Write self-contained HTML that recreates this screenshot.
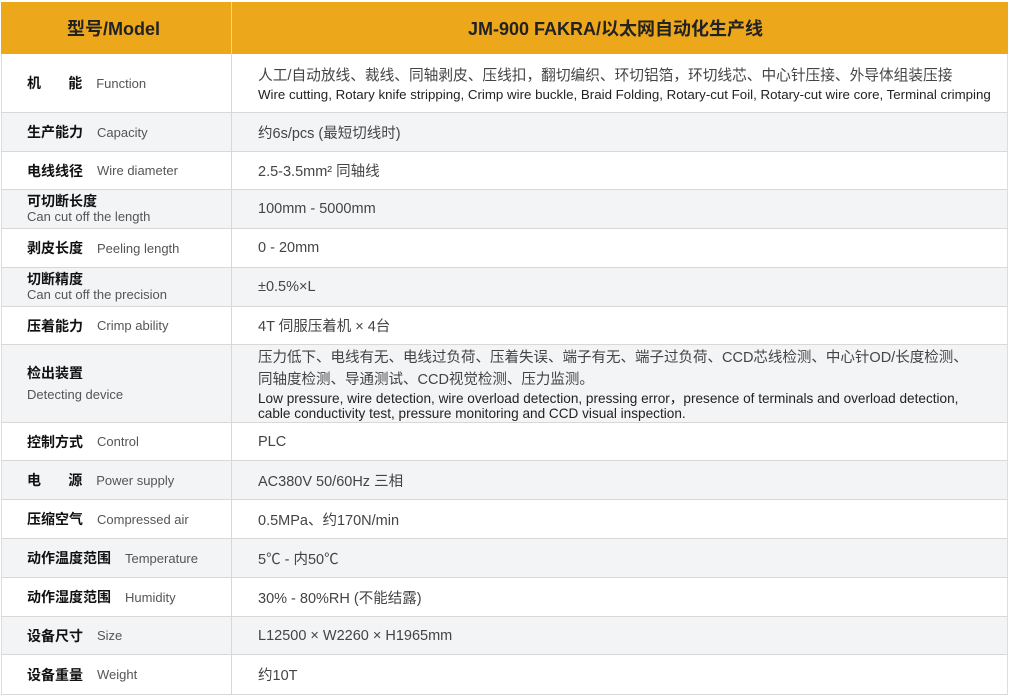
<!DOCTYPE html>
<html><head><meta charset="utf-8"><style>
*{margin:0;padding:0;box-sizing:border-box}
body{width:1010px;height:695px;background:#fff;font-family:"Liberation Sans","Noto Sans CJK SC",sans-serif;color:#333;position:relative;overflow:hidden}
.hd{position:absolute;left:1px;top:2px;width:1007px;height:52px;background:#EDA71A}
.hd div{position:absolute;top:0;height:52px;line-height:54px;font-size:18px;color:#222;font-weight:bold}
.r{position:absolute;left:1px;width:1007px;border-bottom:1px solid #d8d8d8;border-left:1px solid #ddd;border-right:1px solid #ddd}
.g{background:#f3f4f6}
.l{position:absolute;left:25px;top:0;bottom:0;display:flex;align-items:center;font-size:14px;color:#111;font-weight:bold;white-space:nowrap}
.l span{font-weight:normal;color:#555;font-size:13px;margin-left:14px}
.l2{flex-direction:column;align-items:flex-start;justify-content:center;line-height:15px}
.l2 span{margin-left:0}
.v{position:absolute;left:256px;top:0;bottom:0;display:flex;flex-direction:column;justify-content:center;font-size:14.5px;color:#444;white-space:nowrap}
.v .e{font-size:13.3px;color:#222;line-height:15px}
.div{position:absolute;left:231px;top:2px;width:1px;height:693px;background:#d8d8d8}
</style></head><body>
<div class="hd"><div style="left:66px">型号/Model</div><div style="left:467px">JM-900 FAKRA/以太网自动化生产线</div></div>
<div class="r" style="top:54px;height:59px"><div class="l">机&nbsp;&nbsp;&nbsp;&nbsp;&nbsp;&nbsp;&nbsp;能<span>Function</span></div><div class="v"><div style="line-height:22px;font-size:14.7px">人工/自动放线、裁线、同轴剥皮、压线扣，翻切编织、环切铝箔，环切线芯、中心针压接、外导体组装压接</div><div class="e">Wire cutting, Rotary knife stripping, Crimp wire buckle, Braid Folding, Rotary-cut Foil, Rotary-cut wire core, Terminal crimping</div></div></div>
<div class="r g" style="top:113px;height:39px"><div class="l">生产能力<span>Capacity</span></div><div class="v">约6s/pcs (最短切线时)</div></div>
<div class="r" style="top:152px;height:38px"><div class="l">电线线径<span>Wire diameter</span></div><div class="v">2.5-3.5mm² 同轴线</div></div>
<div class="r g" style="top:190px;height:39px"><div class="l l2">可切断长度<span>Can cut off the length</span></div><div class="v">100mm - 5000mm</div></div>
<div class="r" style="top:229px;height:39px"><div class="l">剥皮长度<span>Peeling length</span></div><div class="v">0 - 20mm</div></div>
<div class="r g" style="top:268px;height:39px"><div class="l l2">切断精度<span>Can cut off the precision</span></div><div class="v">±0.5%×L</div></div>
<div class="r" style="top:307px;height:38px"><div class="l">压着能力<span>Crimp ability</span></div><div class="v">4T 伺服压着机 × 4台</div></div>
<div class="r g" style="top:345px;height:78px"><div class="l l2" style="line-height:22px">检出装置<span>Detecting device</span></div><div class="v"><div style="line-height:22px">压力低下、电线有无、电线过负荷、压着失误、端子有无、端子过负荷、CCD芯线检测、中心针OD/长度检测、<br>同轴度检测、导通测试、CCD视觉检测、压力监测。</div><div class="e" style="font-size:13.6px">Low pressure, wire detection, wire overload detection, pressing error，presence of terminals and overload detection,<br>cable conductivity test, pressure monitoring and CCD visual inspection.</div></div></div>
<div class="r" style="top:423px;height:38px"><div class="l">控制方式<span>Control</span></div><div class="v">PLC</div></div>
<div class="r g" style="top:461px;height:39px"><div class="l">电&nbsp;&nbsp;&nbsp;&nbsp;&nbsp;&nbsp;&nbsp;源<span>Power supply</span></div><div class="v">AC380V 50/60Hz 三相</div></div>
<div class="r" style="top:500px;height:39px"><div class="l">压缩空气<span>Compressed air</span></div><div class="v">0.5MPa、约170N/min</div></div>
<div class="r g" style="top:539px;height:39px"><div class="l">动作温度范围<span>Temperature</span></div><div class="v">5℃ - 内50℃</div></div>
<div class="r" style="top:578px;height:39px"><div class="l">动作湿度范围<span>Humidity</span></div><div class="v">30% - 80%RH (不能结露)</div></div>
<div class="r g" style="top:617px;height:38px"><div class="l">设备尺寸<span>Size</span></div><div class="v">L12500 × W2260 × H1965mm</div></div>
<div class="r" style="top:655px;height:40px"><div class="l">设备重量<span>Weight</span></div><div class="v">约10T</div></div>
<div class="div"></div>
</body></html>
